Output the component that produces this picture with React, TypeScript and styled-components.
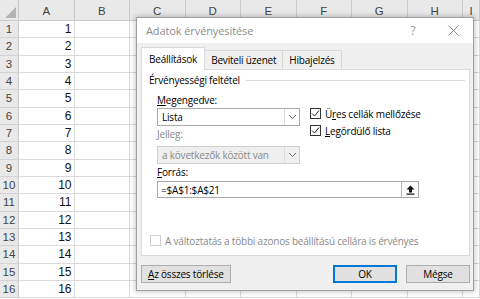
import React from 'react';
import styled, { createGlobalStyle } from 'styled-components';

const GlobalStyle = createGlobalStyle`
  html, body {
    margin: 0;
    padding: 0;
    background: #fff;
    overflow: hidden;
  }
`;

const COLUMNS = ['A', 'B', 'C', 'D', 'E', 'F', 'G', 'H', 'I'];
const ROWS = Array.from({ length: 16 }, (_, i) => i + 1);

const Screen = styled.div`
    position: relative;
    width: 480px;
    height: 299px;
    overflow: hidden;
    font-family: "Liberation Sans", Arial, sans-serif;
`;

const SheetGrid = styled.div`
    display: grid;
    grid-template-columns: 19px repeat(8, 55.5px) 1fr;
    grid-template-rows: 21px repeat(16, 17.33px);
`;

const Corner = styled.div`
    position: relative;
    background: #e9e9e9;
    border-right: 1px solid #c9c9c9;
    border-bottom: 1px solid #c9c9c9;
    &::after {
        content: '';
        position: absolute;
        right: 2px;
        bottom: 2px;
        border-left: 11px solid transparent;
        border-bottom: 11px solid #b4b4b4;
    }
`;

const ColHeader = styled.div`
    background: #e9e9e9;
    border-right: 1px solid #c9c9c9;
    border-bottom: 1px solid #c9c9c9;
    color: #444;
    font-size: 11.5px;
    display: flex;
    align-items: center;
    justify-content: center;
    padding-top: 2px;
`;

const RowHeader = styled.div`
    background: #e9e9e9;
    border-right: 1px solid #c9c9c9;
    border-bottom: 1px solid #d2d2d2;
    color: #444;
    font-size: 11.5px;
    display: flex;
    align-items: center;
    justify-content: center;
`;

const Cell = styled.div<{ $numeric?: boolean }>`
    border-right: 1px solid #dadada;
    border-bottom: 1px solid #dadada;
    color: #111;
    font-size: 12px;
    display: flex;
    align-items: center;
    justify-content: ${p => (p.$numeric ? 'flex-end' : 'flex-start')};
    padding-right: 2px;
`;

const Dialog = styled.div`
    position: absolute;
    left: 136px;
    top: 17px;
    width: 338px;
    height: 274px;
    box-sizing: border-box;
    background: #f0f0f0;
    border: 1px solid #a0a0a0;
    box-shadow: 0 0 5px 1px rgba(0, 0, 0, 0.22);
    display: flex;
    flex-direction: column;
    font-family: "Open Sans", "Noto Sans", sans-serif;
    font-size: 10px;
    letter-spacing: -0.2px;
    color: #000;
`;

const TitleBar = styled.div`
    height: 25px;
    background: #fff;
    display: flex;
    align-items: center;
    padding-left: 9px;
    color: #8d8d8d;
    font-size: 11px;
    letter-spacing: -0.1px;
`;

const TitleText = styled.span`
    flex: 1;
`;

const TitleButton = styled.span`
    width: 40px;
    height: 25px;
    display: flex;
    align-items: center;
    justify-content: center;
    color: #9a9a9a;
    font-size: 12px;
`;

const Body = styled.div`
    padding: 4px 3px 0 4px;
    display: flex;
    flex-direction: column;
`;

const TabStrip = styled.div`
    display: flex;
    align-items: flex-end;
    height: 23px;
    position: relative;
    z-index: 1;
`;

const Tab = styled.div<{ $active?: boolean }>`
    height: ${p => (p.$active ? '23px' : '20px')};
    box-sizing: border-box;
    padding: 0 ${p => (p.$active ? '7px' : '6px')};
    display: flex;
    align-items: center;
    background: ${p => (p.$active ? '#fff' : '#f0f0f0')};
    border: 1px solid #d9d9d9;
    border-bottom: ${p => (p.$active ? '1px solid #fff' : '1px solid #d9d9d9')};
    margin-left: ${p => (p.$active ? '0' : '-1px')};
`;

const Panel = styled.div`
    margin-top: -1px;
    height: 187px;
    box-sizing: border-box;
    background: #fff;
    border: 1px solid #d9d9d9;
    display: flex;
    flex-direction: column;
    padding-bottom: 6px;
`;

const GroupHeader = styled.div`
    margin-top: 3px;
    height: 14px;
    padding-left: 7px;
    padding-right: 4px;
    display: flex;
    align-items: center;
    &::after {
        content: '';
        flex: 1;
        margin-left: 6px;
        border-top: 1px solid #dcdcdc;
    }
`;

const Section = styled.div`
    padding-left: 15px;
    display: flex;
    flex-direction: column;
`;

const TopRow = styled.div`
    margin-top: 6px;
    display: flex;
`;

const LeftColumn = styled.div`
    width: 143px;
    display: flex;
    flex-direction: column;
`;

const RightColumn = styled.div`
    margin-left: 10px;
    margin-top: 12px;
    display: flex;
    flex-direction: column;
`;

const FieldLabel = styled.div<{ $disabled?: boolean; $gap?: number }>`
    height: 14px;
    line-height: 14px;
    margin-top: ${p => p.$gap ?? 0}px;
    color: ${p => (p.$disabled ? '#8a8a8a' : '#000')};
`;

const Key = styled.span`
    text-decoration: underline;
    text-underline-offset: 1px;
`;

const Select = styled.div<{ $disabled?: boolean; $gap: number }>`
    margin-top: ${p => p.$gap}px;
    height: 18px;
    box-sizing: border-box;
    border: 1px solid ${p => (p.$disabled ? '#cfcfcf' : '#a8a8a8')};
    background: ${p => (p.$disabled ? '#efefef' : '#fff')};
    color: ${p => (p.$disabled ? '#8a8a8a' : '#000')};
    display: flex;
    align-items: center;
`;

const SelectValue = styled.span`
    flex: 1;
    padding-left: 4px;
`;

const SelectArrow = styled.span`
    width: 14px;
    height: 100%;
    border-left: 1px solid #dcdcdc;
    display: flex;
    align-items: center;
    justify-content: center;
`;

const CheckRow = styled.div<{ $disabled?: boolean }>`
    height: 17px;
    display: flex;
    align-items: center;
    gap: 4px;
    color: ${p => (p.$disabled ? '#8a8a8a' : '#000')};
`;

const Box = styled.span<{ $disabled?: boolean }>`
    width: 11px;
    height: 11px;
    box-sizing: border-box;
    border: 1px solid ${p => (p.$disabled ? '#cfcfcf' : '#333')};
    background: #fff;
    display: flex;
    align-items: center;
    justify-content: center;
`;

const InputRow = styled.div`
    margin-top: 2px;
    width: 262px;
    height: 17px;
    box-sizing: border-box;
    border: 1px solid #a8a8a8;
    display: flex;
    align-items: center;
`;

const InputValue = styled.span`
    flex: 1;
    padding-left: 3px;
`;

const PickButton = styled.span`
    width: 17px;
    height: 15px;
    box-sizing: border-box;
    border-left: 1px solid #b8b8b8;
    background: #fafafa;
    display: flex;
    align-items: center;
    justify-content: center;
`;

const BottomCheck = styled(CheckRow)`
    margin-top: auto;
    padding-left: 8px;
`;

const ButtonRow = styled.div`
    margin-top: 9px;
    display: flex;
    align-items: center;
`;

const Button = styled.div<{ $primary?: boolean; $gap?: number }>`
    height: 18px;
    min-width: 64px;
    box-sizing: border-box;
    padding: 0 6px;
    margin-left: ${p => p.$gap ?? 0}px;
    white-space: nowrap;
    background: #e1e1e1;
    border: 1px solid ${p => (p.$primary ? '#0078d7' : '#adadad')};
    box-shadow: ${p => (p.$primary ? 'inset 0 0 0 1px #0078d7' : 'none')};
    display: flex;
    align-items: center;
    justify-content: center;
`;

const Spacer = styled.div`
    flex: 1;
`;

const Check = () => (
    <svg width="9" height="9" viewBox="0 0 9 9">
        <path d="M1 4.5 L3.5 7 L8 1.5" fill="none" stroke="#222" strokeWidth="1" />
    </svg>
);

const Chevron = () => (
    <svg width="9" height="6" viewBox="0 0 9 6">
        <path d="M1 1 L4.5 4.5 L8 1" fill="none" stroke="#707070" strokeWidth="1" />
    </svg>
);

const UpArrow = () => (
    <svg width="9" height="10" viewBox="0 0 9 10">
        <path d="M4.5 0.5 L8.5 4.5 L6 4.5 L6 7.5 L3 7.5 L3 4.5 L0.5 4.5 Z" fill="#111" />
        <rect x="0.5" y="8.5" width="8" height="1.2" fill="#111" />
    </svg>
);

const CloseIcon = () => (
    <svg width="11" height="11" viewBox="0 0 11 11">
        <path d="M0.5 0.5 L10.5 10.5 M10.5 0.5 L0.5 10.5" stroke="#8a8a8a" strokeWidth="1" />
    </svg>
);

const Spreadsheet = () => (
    <SheetGrid>
        <Corner />
        {COLUMNS.map(c => (
            <ColHeader key={c}>{c}</ColHeader>
        ))}
        {ROWS.map(r => (
            <React.Fragment key={r}>
                <RowHeader>{r}</RowHeader>
                {COLUMNS.map((c, i) => (
                    <Cell key={c} $numeric={i === 0}>
                        {i === 0 ? r : ''}
                    </Cell>
                ))}
            </React.Fragment>
        ))}
    </SheetGrid>
);

const ValidationDialog = () => (
    <Dialog>
        <TitleBar>
            <TitleText>Adatok érvényesítése</TitleText>
            <TitleButton>?</TitleButton>
            <TitleButton>
                <CloseIcon />
            </TitleButton>
        </TitleBar>
        <Body>
            <TabStrip>
                <Tab $active>Beállítások</Tab>
                <Tab>Beviteli üzenet</Tab>
                <Tab>Hibajelzés</Tab>
            </TabStrip>
            <Panel>
                <GroupHeader>Érvényességi feltétel</GroupHeader>
                <Section>
                    <TopRow>
                        <LeftColumn>
                            <FieldLabel>
                                <Key>M</Key>egengedve:
                            </FieldLabel>
                            <Select $gap={1}>
                                <SelectValue>Lista</SelectValue>
                                <SelectArrow>
                                    <Chevron />
                                </SelectArrow>
                            </Select>
                            <FieldLabel $disabled $gap={1}>
                                Jelleg:
                            </FieldLabel>
                            <Select $disabled $gap={5}>
                                <SelectValue>a következők között van</SelectValue>
                                <SelectArrow>
                                    <Chevron />
                                </SelectArrow>
                            </Select>
                        </LeftColumn>
                        <RightColumn>
                            <CheckRow>
                                <Box>
                                    <Check />
                                </Box>
                                <span>
                                    Ü<Key>r</Key>es cellák mellőzése
                                </span>
                            </CheckRow>
                            <CheckRow>
                                <Box>
                                    <Check />
                                </Box>
                                <span>
                                    <Key>L</Key>egördülő lista
                                </span>
                            </CheckRow>
                        </RightColumn>
                    </TopRow>
                    <FieldLabel $gap={1}>
                        <Key>F</Key>orrás:
                    </FieldLabel>
                    <InputRow>
                        <InputValue>=$A$1:$A$21</InputValue>
                        <PickButton>
                            <UpArrow />
                        </PickButton>
                    </InputRow>
                </Section>
                <BottomCheck $disabled>
                    <Box $disabled />
                    <span>A változtatás a többi azonos beállítású cellára is érvényes</span>
                </BottomCheck>
            </Panel>
            <ButtonRow>
                <Button>
                    <span>
                        <Key>A</Key>z összes törlése
                    </span>
                </Button>
                <Spacer />
                <Button $primary>OK</Button>
                <Button $gap={9}>Mégse</Button>
            </ButtonRow>
        </Body>
    </Dialog>
);

export default function App() {
    return (
        <Screen>
            <GlobalStyle />
            <Spreadsheet />
            <ValidationDialog />
        </Screen>
    );
}
